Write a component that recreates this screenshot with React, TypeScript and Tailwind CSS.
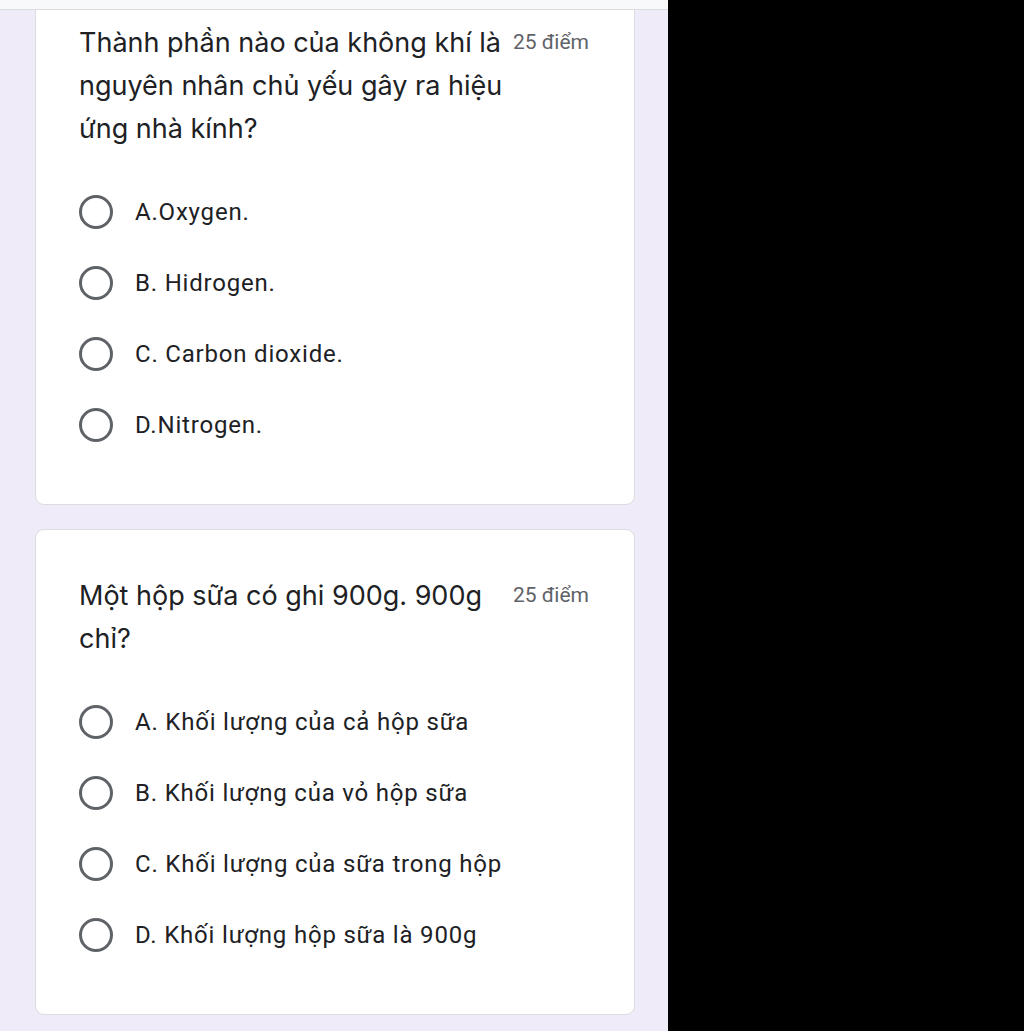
import React from 'react';

type Question = {
  title: string;
  points: string;
  options: string[];
};

const questions: Question[] = [
  {
    title: 'Thành phần nào của không khí là nguyên nhân chủ yếu gây ra hiệu ứng nhà kính?',
    points: '25 điểm',
    options: ['A.Oxygen.', 'B. Hidrogen.', 'C. Carbon dioxide.', 'D.Nitrogen.'],
  },
  {
    title: 'Một hộp sữa có ghi 900g. 900g chỉ?',
    points: '25 điểm',
    options: [
      'A. Khối lượng của cả hộp sữa',
      'B. Khối lượng của vỏ hộp sữa',
      'C. Khối lượng của sữa trong hộp',
      'D. Khối lượng hộp sữa là 900g',
    ],
  },
];

const QuestionCard: React.FC<{ q: Question; className?: string }> = ({ q, className = '' }) => (
  <div
    className={`w-[600px] rounded-[9px] border border-[#dadce0] bg-white px-[43px] pt-[44px] pb-[44px] ${className}`}
  >
    <div className="flex items-start">
      <div className="w-[428px] font-['Inter','Roboto',sans-serif] text-[27px] leading-[43px] text-[#202124]">
        {q.title}
      </div>
      <div className="ml-[6px] shrink-0 text-[21px] leading-[43px] text-[#5f6368]">{q.points}</div>
    </div>
    <div className="mt-[26px] flex flex-col">
      {q.options.map((opt) => (
        <label key={opt} className="flex h-[71px] items-center">
          <span className="h-[34px] w-[34px] shrink-0 rounded-full border-[3px] border-[#5f6368]" />
          <span className="ml-[22px] text-[24px] leading-[28px] tracking-[0.8px] text-[#202124]">{opt}</span>
        </label>
      ))}
    </div>
  </div>
);

export default function App() {
  return (
    <div className="flex h-[1031px] w-full overflow-hidden bg-black font-['Roboto','Noto_Sans',sans-serif]">
      <div className="relative w-[668px] shrink-0 bg-[#efebf8]">
        {/* sticky app bar, only its bottom edge is visible */}
        <div className="absolute inset-x-0 top-0 z-10 h-[10px] border-b border-[#dadce0] bg-[#f8f9fa]" />
        <div className="ml-[35px] flex flex-col gap-[24px]">
          <QuestionCard q={questions[0]} className="-mt-[24px]" />
          <QuestionCard q={questions[1]} />
        </div>
      </div>
    </div>
  );
}
